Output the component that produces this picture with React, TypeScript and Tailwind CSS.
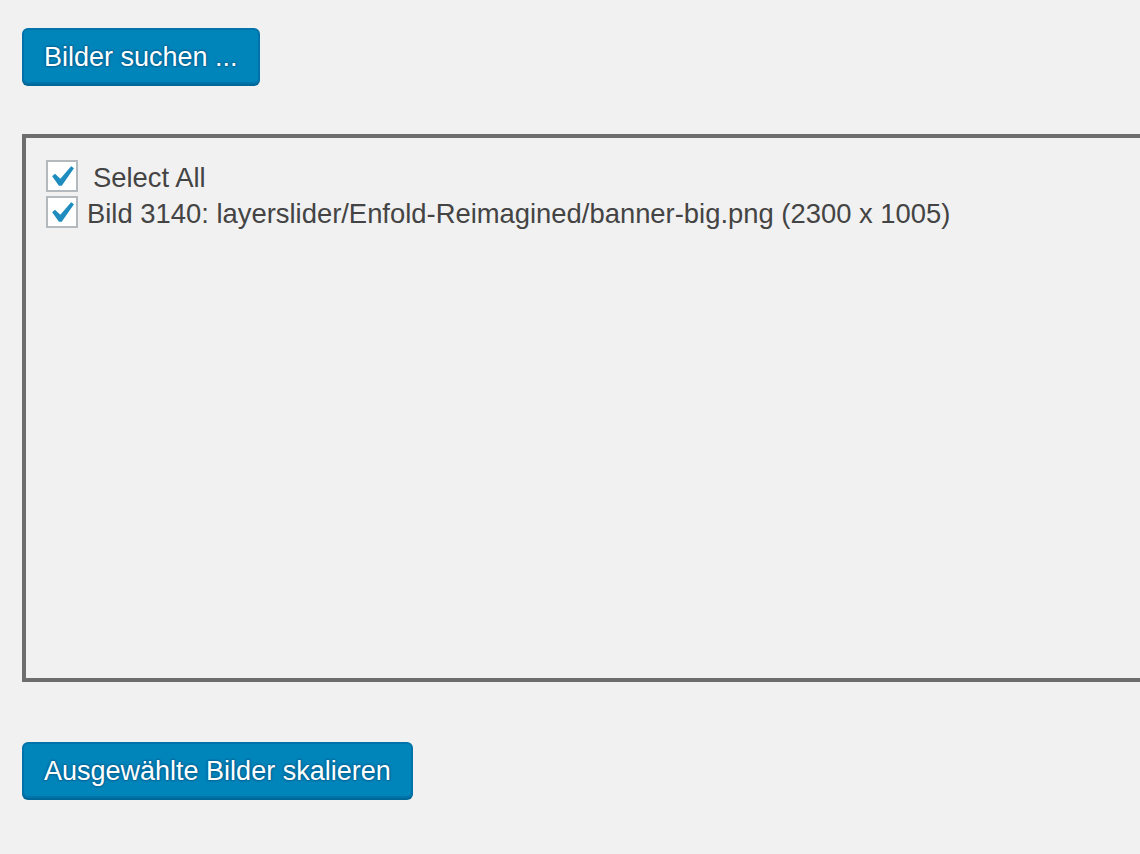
import React from "react";

function Check() {
  return (
    <span className="relative inline-block h-[32px] w-[32px] shrink-0 border-2 border-[#b4b9be] bg-white">
      <svg
        viewBox="0 0 20 20"
        className="absolute left-[-8px] top-[-6px] h-[42px] w-[42px]"
        fill="#1e8cbe"
      >
        <path d="M14.83 4.89l1.34.94-5.81 8.38H9.02L5.78 9.670l1.34-1.25 2.57 2.4z" />
      </svg>
    </span>
  );
}

const btn =
  "rounded-[6px] border-2 border-[#0073aa] bg-[#0085ba] text-white text-[27px] leading-none shadow-[0_2px_0_#006799] [text-shadow:0_-1px_2px_#006799,1px_0_2px_#006799,0_1px_2px_#006799,-1px_0_2px_#006799]";

export default function App() {
  return (
    <div
      className="min-h-[854px] w-[1140px] overflow-hidden bg-[#f1f1f1] pl-[22px] pt-[28px] text-[#444]"
      style={{ fontFamily: '"Liberation Sans", Arial, sans-serif' }}
    >
      <button className={`${btn} h-[56px] px-[20px] pt-[2px]`}>Bilder suchen ...</button>
      <div className="mt-[50px] h-[548px] w-[1200px] border-4 border-[#6d6d6d] pl-[20px] pt-[22px]">
        <div className="flex flex-col gap-[4px]">
          <label className="flex items-center">
            <Check />
            <span className="ml-[15px] pt-[3px] text-[27.4px] leading-none">Select All</span>
          </label>
          <label className="flex items-center">
            <Check />
            <span className="ml-[9px] pt-[3px] text-[27.4px] leading-none">
              Bild 3140: layerslider/Enfold-Reimagined/banner-big.png (2300 x 1005)
            </span>
          </label>
        </div>
      </div>
      <button className={`${btn} mt-[60px] h-[56px] px-[20px] pt-[2px]`}>Ausgewählte Bilder skalieren</button>
    </div>
  );
}
